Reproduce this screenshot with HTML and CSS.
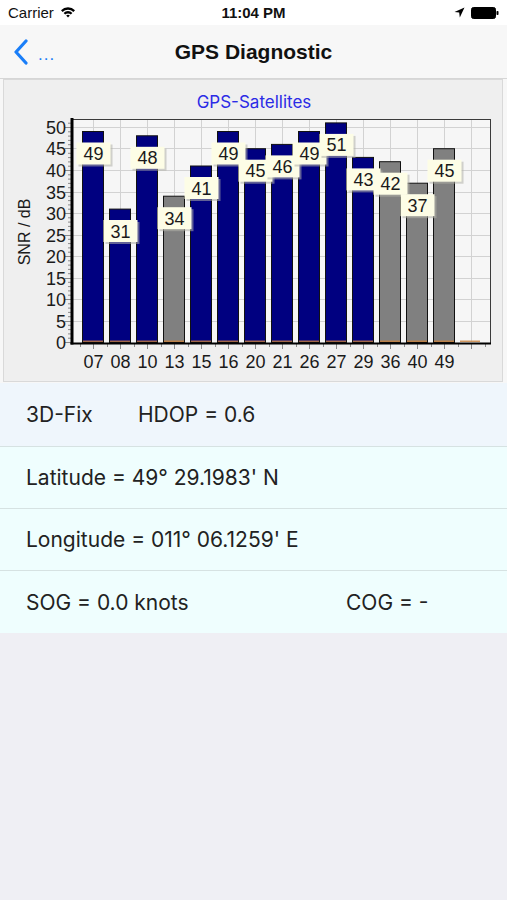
FILE: index.html
```html
<!DOCTYPE html>
<html>
<head>
<meta charset="utf-8">
<link rel="stylesheet" href="styles.css">
</head>
<body>
<div class="screen">
  <div class="status">
    <div class="status-left">
      <span class="carrier">Carrier</span>
      <svg class="wifi" width="16" height="12" viewBox="0 0 16 12">
        <path d="M1 4.2 A10 10 0 0 1 15 4.2 L13.4 5.9 A7.6 7.6 0 0 0 2.6 5.9 Z" fill="#000"/>
        <path d="M3.6 6.9 A6.2 6.2 0 0 1 12.4 6.9 L10.8 8.6 A3.9 3.9 0 0 0 5.2 8.6 Z" fill="#000"/>
        <path d="M6.2 9.6 A2.5 2.5 0 0 1 9.8 9.6 L8 11.5 Z" fill="#000"/>
      </svg>
    </div>
    <div class="time">11:04 PM</div>
    <div class="status-right">
      <svg class="loc" width="11" height="11" viewBox="0 0 11 11">
        <path d="M10.5 0.5 L0.5 5 L5.2 5.6 L5.8 10.5 Z" fill="#000"/>
      </svg>
      <svg class="battery" width="28" height="12" viewBox="0 0 28 12">
        <rect x="0.5" y="0.5" width="24" height="11" rx="2" fill="#000" stroke="#000"/>
        <rect x="25.5" y="4" width="2" height="4" rx="0.8" fill="#000"/>
      </svg>
    </div>
  </div>
  <div class="navbar">
    <div class="back">
      <svg class="chev" width="16" height="26" viewBox="0 0 16 26">
        <path d="M13 2 L3 13 L13 24" fill="none" stroke="#1a7ef8" stroke-width="3.2" stroke-linecap="round" stroke-linejoin="round"/>
      </svg>
      <span class="dots">...</span>
    </div>
    <div class="title">GPS Diagnostic</div>
  </div>

  <div class="chart-panel">
    <svg class="chart" width="507" height="304" viewBox="0 79 507 304">
      <rect x="0" y="79" width="507" height="304" fill="#f7f7f7"/>
      <rect x="3.5" y="79.5" width="499" height="302" fill="#efefef" stroke="#d9d9d9"/>
      <text class="ctitle" x="254" y="108" text-anchor="middle">GPS-Satellites</text>
      <!-- plot area -->
      <rect x="72" y="119" width="419" height="224" fill="#f6f6f6"/>
      <g stroke="#d2d2d2" stroke-width="1">
        <line x1="73" y1="321.5" x2="490" y2="321.5"/>
        <line x1="73" y1="299.5" x2="490" y2="299.5"/>
        <line x1="73" y1="278.5" x2="490" y2="278.5"/>
        <line x1="73" y1="256.5" x2="490" y2="256.5"/>
        <line x1="73" y1="235.5" x2="490" y2="235.5"/>
        <line x1="73" y1="213.5" x2="490" y2="213.5"/>
        <line x1="73" y1="192.5" x2="490" y2="192.5"/>
        <line x1="73" y1="170.5" x2="490" y2="170.5"/>
        <line x1="73" y1="148.5" x2="490" y2="148.5"/>
        <line x1="73" y1="127.5" x2="490" y2="127.5"/>
        <line x1="93.5" y1="120" x2="93.5" y2="342"/>
        <line x1="120.5" y1="120" x2="120.5" y2="342"/>
        <line x1="147.5" y1="120" x2="147.5" y2="342"/>
        <line x1="174.5" y1="120" x2="174.5" y2="342"/>
        <line x1="201.5" y1="120" x2="201.5" y2="342"/>
        <line x1="228.5" y1="120" x2="228.5" y2="342"/>
        <line x1="255.5" y1="120" x2="255.5" y2="342"/>
        <line x1="282.5" y1="120" x2="282.5" y2="342"/>
        <line x1="309.5" y1="120" x2="309.5" y2="342"/>
        <line x1="336.5" y1="120" x2="336.5" y2="342"/>
        <line x1="363.5" y1="120" x2="363.5" y2="342"/>
        <line x1="390.5" y1="120" x2="390.5" y2="342"/>
        <line x1="417.5" y1="120" x2="417.5" y2="342"/>
        <line x1="444.5" y1="120" x2="444.5" y2="342"/>
        <line x1="471.5" y1="120" x2="471.5" y2="342"/>
      </g>
      <!-- plot frame top/right -->
      <line x1="72" y1="119.5" x2="491" y2="119.5" stroke="#3a3a3a" stroke-width="1"/>
      <line x1="490.5" y1="119" x2="490.5" y2="343" stroke="#3a3a3a" stroke-width="1"/>

      <!-- y ticks -->
      <g stroke="#8a8a8a" stroke-width="1">
        <line x1="65" y1="342.5" x2="71" y2="342.5"/>
        <line x1="68" y1="338.2" x2="71" y2="338.2"/>
        <line x1="68" y1="333.9" x2="71" y2="333.9"/>
        <line x1="68" y1="329.6" x2="71" y2="329.6"/>
        <line x1="68" y1="325.3" x2="71" y2="325.3"/>
        <line x1="65" y1="321.5" x2="71" y2="321.5"/>
        <line x1="68" y1="316.7" x2="71" y2="316.7"/>
        <line x1="68" y1="312.4" x2="71" y2="312.4"/>
        <line x1="68" y1="308.1" x2="71" y2="308.1"/>
        <line x1="68" y1="303.8" x2="71" y2="303.8"/>
        <line x1="65" y1="299.5" x2="71" y2="299.5"/>
        <line x1="68" y1="295.2" x2="71" y2="295.2"/>
        <line x1="68" y1="290.9" x2="71" y2="290.9"/>
        <line x1="68" y1="286.6" x2="71" y2="286.6"/>
        <line x1="68" y1="282.3" x2="71" y2="282.3"/>
        <line x1="65" y1="278.5" x2="71" y2="278.5"/>
        <line x1="68" y1="273.7" x2="71" y2="273.7"/>
        <line x1="68" y1="269.4" x2="71" y2="269.4"/>
        <line x1="68" y1="265.1" x2="71" y2="265.1"/>
        <line x1="68" y1="260.8" x2="71" y2="260.8"/>
        <line x1="65" y1="256.5" x2="71" y2="256.5"/>
        <line x1="68" y1="252.2" x2="71" y2="252.2"/>
        <line x1="68" y1="247.9" x2="71" y2="247.9"/>
        <line x1="68" y1="243.6" x2="71" y2="243.6"/>
        <line x1="68" y1="239.3" x2="71" y2="239.3"/>
        <line x1="65" y1="235.5" x2="71" y2="235.5"/>
        <line x1="68" y1="230.7" x2="71" y2="230.7"/>
        <line x1="68" y1="226.4" x2="71" y2="226.4"/>
        <line x1="68" y1="222.1" x2="71" y2="222.1"/>
        <line x1="68" y1="217.8" x2="71" y2="217.8"/>
        <line x1="65" y1="213.5" x2="71" y2="213.5"/>
        <line x1="68" y1="209.2" x2="71" y2="209.2"/>
        <line x1="68" y1="204.9" x2="71" y2="204.9"/>
        <line x1="68" y1="200.6" x2="71" y2="200.6"/>
        <line x1="68" y1="196.3" x2="71" y2="196.3"/>
        <line x1="65" y1="192.5" x2="71" y2="192.5"/>
        <line x1="68" y1="187.7" x2="71" y2="187.7"/>
        <line x1="68" y1="183.4" x2="71" y2="183.4"/>
        <line x1="68" y1="179.1" x2="71" y2="179.1"/>
        <line x1="68" y1="174.8" x2="71" y2="174.8"/>
        <line x1="65" y1="170.5" x2="71" y2="170.5"/>
        <line x1="68" y1="166.2" x2="71" y2="166.2"/>
        <line x1="68" y1="161.9" x2="71" y2="161.9"/>
        <line x1="68" y1="157.6" x2="71" y2="157.6"/>
        <line x1="68" y1="153.3" x2="71" y2="153.3"/>
        <line x1="65" y1="148.5" x2="71" y2="148.5"/>
        <line x1="68" y1="144.7" x2="71" y2="144.7"/>
        <line x1="68" y1="140.4" x2="71" y2="140.4"/>
        <line x1="68" y1="136.1" x2="71" y2="136.1"/>
        <line x1="68" y1="131.8" x2="71" y2="131.8"/>
        <line x1="65" y1="127.5" x2="71" y2="127.5"/>
        <line x1="68" y1="123.2" x2="71" y2="123.2"/>
      </g>
      <!-- x ticks -->
      <g stroke="#8a8a8a" stroke-width="1">
        <line x1="93.5" y1="344" x2="93.5" y2="349"/>
        <line x1="120.5" y1="344" x2="120.5" y2="349"/>
        <line x1="147.5" y1="344" x2="147.5" y2="349"/>
        <line x1="174.5" y1="344" x2="174.5" y2="349"/>
        <line x1="201.5" y1="344" x2="201.5" y2="349"/>
        <line x1="228.5" y1="344" x2="228.5" y2="349"/>
        <line x1="255.5" y1="344" x2="255.5" y2="349"/>
        <line x1="282.5" y1="344" x2="282.5" y2="349"/>
        <line x1="309.5" y1="344" x2="309.5" y2="349"/>
        <line x1="336.5" y1="344" x2="336.5" y2="349"/>
        <line x1="363.5" y1="344" x2="363.5" y2="349"/>
        <line x1="390.5" y1="344" x2="390.5" y2="349"/>
        <line x1="417.5" y1="344" x2="417.5" y2="349"/>
        <line x1="444.5" y1="344" x2="444.5" y2="349"/>
        <line x1="471.5" y1="344" x2="471.5" y2="349"/>
        <line x1="80.5" y1="344" x2="80.5" y2="347"/>
        <line x1="107.5" y1="344" x2="107.5" y2="347"/>
        <line x1="134.5" y1="344" x2="134.5" y2="347"/>
        <line x1="161.5" y1="344" x2="161.5" y2="347"/>
        <line x1="188.5" y1="344" x2="188.5" y2="347"/>
        <line x1="215.5" y1="344" x2="215.5" y2="347"/>
        <line x1="242.5" y1="344" x2="242.5" y2="347"/>
        <line x1="269.5" y1="344" x2="269.5" y2="347"/>
        <line x1="296.5" y1="344" x2="296.5" y2="347"/>
        <line x1="323.5" y1="344" x2="323.5" y2="347"/>
        <line x1="350.5" y1="344" x2="350.5" y2="347"/>
        <line x1="377.5" y1="344" x2="377.5" y2="347"/>
        <line x1="404.5" y1="344" x2="404.5" y2="347"/>
        <line x1="431.5" y1="344" x2="431.5" y2="347"/>
        <line x1="458.5" y1="344" x2="458.5" y2="347"/>
        <line x1="485.5" y1="344" x2="485.5" y2="347"/>
      </g>

      <!-- bars -->
      <g stroke="#111" stroke-width="1">
        <rect class="bar-b" x="82.5" y="131.5" width="21" height="211"/>
        <rect class="bar-b" x="109.5" y="209.1" width="21" height="133.4"/>
        <rect class="bar-b" x="136.5" y="135.8" width="21" height="206.7"/>
        <rect class="bar-g" x="163.5" y="196.2" width="21" height="146.3"/>
        <rect class="bar-b" x="190.5" y="166" width="21" height="176.5"/>
        <rect class="bar-b" x="217.5" y="131.5" width="21" height="211"/>
        <rect class="bar-b" x="244.5" y="148.7" width="21" height="193.8"/>
        <rect class="bar-b" x="271.5" y="144.4" width="21" height="198.1"/>
        <rect class="bar-b" x="298.5" y="131.5" width="21" height="211"/>
        <rect class="bar-b" x="325.5" y="122.9" width="21" height="219.6"/>
        <rect class="bar-b" x="352.5" y="157.4" width="21" height="185.1"/>
        <rect class="bar-g" x="379.5" y="161.7" width="21" height="180.8"/>
        <rect class="bar-g" x="406.5" y="183.2" width="21" height="159.3"/>
        <rect class="bar-g" x="433.5" y="148.7" width="21" height="193.8"/>
      </g>
      <!-- orange baselines -->
      <g stroke="#c9803a" stroke-width="1.2">
        <line x1="83" y1="341.2" x2="103" y2="341.2"/>
        <line x1="110" y1="341.2" x2="130" y2="341.2"/>
        <line x1="137" y1="341.2" x2="157" y2="341.2"/>
        <line x1="164" y1="341.2" x2="184" y2="341.2"/>
        <line x1="191" y1="341.2" x2="211" y2="341.2"/>
        <line x1="218" y1="341.2" x2="238" y2="341.2"/>
        <line x1="245" y1="341.2" x2="265" y2="341.2"/>
        <line x1="272" y1="341.2" x2="292" y2="341.2"/>
        <line x1="299" y1="341.2" x2="319" y2="341.2"/>
        <line x1="326" y1="341.2" x2="346" y2="341.2"/>
        <line x1="353" y1="341.2" x2="373" y2="341.2"/>
        <line x1="380" y1="341.2" x2="400" y2="341.2"/>
        <line x1="407" y1="341.2" x2="427" y2="341.2"/>
        <line x1="434" y1="341.2" x2="454" y2="341.2"/>
        <line x1="460" y1="341.2" x2="480" y2="341.2"/>
      </g>

      <!-- axes -->
      <line x1="72" y1="118" x2="72" y2="344.5" stroke="#000" stroke-width="3"/>
      <line x1="70.5" y1="343.5" x2="491" y2="343.5" stroke="#000" stroke-width="2.2"/>

      <!-- y labels -->
      <g class="axlab" text-anchor="end">
        <text x="66" y="349">0</text>
        <text x="66" y="327.5">5</text>
        <text x="66" y="306">10</text>
        <text x="66" y="284.5">15</text>
        <text x="66" y="263">20</text>
        <text x="66" y="241.5">25</text>
        <text x="66" y="220">30</text>
        <text x="66" y="198.5">35</text>
        <text x="66" y="177">40</text>
        <text x="66" y="155">45</text>
        <text x="66" y="133.5">50</text>
      </g>
      <text class="ylabel" transform="translate(30 232) rotate(-90)" text-anchor="middle">SNR / dB</text>
      <!-- x labels -->
      <g class="axlab" text-anchor="middle">
        <text x="93.5" y="368">07</text>
        <text x="120.5" y="368">08</text>
        <text x="147.5" y="368">10</text>
        <text x="174.5" y="368">13</text>
        <text x="201.5" y="368">15</text>
        <text x="228.5" y="368">16</text>
        <text x="255.5" y="368">20</text>
        <text x="282.5" y="368">21</text>
        <text x="309.5" y="368">26</text>
        <text x="336.5" y="368">27</text>
        <text x="363.5" y="368">29</text>
        <text x="390.5" y="368">36</text>
        <text x="417.5" y="368">40</text>
        <text x="444.5" y="368">49</text>
      </g>

      <!-- value labels -->
      <g class="vlab">
        <rect class="sh" x="78.5" y="144.5" width="34" height="22"/><rect class="box" x="76.5" y="142.5" width="34" height="22"/><text x="93.5" y="160">49</text>
        <rect class="sh" x="105.5" y="222" width="34" height="22"/><rect class="box" x="103.5" y="220" width="34" height="22"/><text x="120.5" y="237.5">31</text>
        <rect class="sh" x="132.5" y="148.8" width="34" height="22"/><rect class="box" x="130.5" y="146.8" width="34" height="22"/><text x="147.5" y="164.3">48</text>
        <rect class="sh" x="159.5" y="209.2" width="34" height="22"/><rect class="box" x="157.5" y="207.2" width="34" height="22"/><text x="174.5" y="224.7">34</text>
        <rect class="sh" x="186.5" y="179" width="34" height="22"/><rect class="box" x="184.5" y="177" width="34" height="22"/><text x="201.5" y="194.5">41</text>
        <rect class="sh" x="213.5" y="144.5" width="34" height="22"/><rect class="box" x="211.5" y="142.5" width="34" height="22"/><text x="228.5" y="160">49</text>
        <rect class="sh" x="240.5" y="161.7" width="34" height="22"/><rect class="box" x="238.5" y="159.7" width="34" height="22"/><text x="255.5" y="177.2">45</text>
        <rect class="sh" x="267.5" y="157.4" width="34" height="22"/><rect class="box" x="265.5" y="155.4" width="34" height="22"/><text x="282.5" y="172.9">46</text>
        <rect class="sh" x="294.5" y="144.5" width="34" height="22"/><rect class="box" x="292.5" y="142.5" width="34" height="22"/><text x="309.5" y="160">49</text>
        <rect class="sh" x="321.5" y="135.9" width="34" height="22"/><rect class="box" x="319.5" y="133.9" width="34" height="22"/><text x="336.5" y="151.4">51</text>
        <rect class="sh" x="348.5" y="170.4" width="34" height="22"/><rect class="box" x="346.5" y="168.4" width="34" height="22"/><text x="363.5" y="185.9">43</text>
        <rect class="sh" x="375.5" y="174.7" width="34" height="22"/><rect class="box" x="373.5" y="172.7" width="34" height="22"/><text x="390.5" y="190.2">42</text>
        <rect class="sh" x="402.5" y="196.2" width="34" height="22"/><rect class="box" x="400.5" y="194.2" width="34" height="22"/><text x="417.5" y="211.7">37</text>
        <rect class="sh" x="429.5" y="161.7" width="34" height="22"/><rect class="box" x="427.5" y="159.7" width="34" height="22"/><text x="444.5" y="177.2">45</text>
      </g>
    </svg>
  </div>

  <div class="list">
    <div class="row row-first">
      <span class="fix">3D-Fix</span>
      <span>HDOP = 0.6</span>
    </div>
    <div class="row">
      <span>Latitude = 49° 29.1983' N</span>
    </div>
    <div class="row">
      <span>Longitude = 011° 06.1259' E</span>
    </div>
    <div class="row row-last">
      <span class="sog">SOG = 0.0 knots</span>
      <span>COG = -</span>
    </div>
  </div>
</div>
</body>
</html>
```
FILE: styles.css
```css
html, body {
  margin: 0;
  padding: 0;
}
body {
  background: #efeff4;
  font-family: "Liberation Sans", Arial, sans-serif;
  width: 507px;
  height: 900px;
  overflow: hidden;
}
.screen {
  width: 507px;
}
.status {
  height: 25px;
  background: #ffffff;
  display: flex;
  align-items: center;
  justify-content: space-between;
  padding: 0 8px;
  position: relative;
  box-sizing: border-box;
}
.status-left {
  display: flex;
  align-items: center;
  gap: 6px;
  width: 120px;
}
.carrier {
  font-size: 15px;
  color: #111;
}
.wifi {
  margin-top: -1px;
}
.time {
  font-size: 15px;
  font-weight: bold;
  color: #111;
}
.status-right {
  display: flex;
  align-items: center;
  justify-content: flex-end;
  gap: 6px;
  width: 120px;
}
.navbar {
  height: 53px;
  background: #f7f7f7;
  border-bottom: 1px solid #d6d6d6;
  display: flex;
  align-items: center;
  justify-content: center;
  position: relative;
}
.back {
  position: absolute;
  left: 13px;
  top: 14px;
  display: flex;
  align-items: flex-end;
  gap: 9px;
}
.dots {
  color: #1a7ef8;
  font-size: 17px;
  letter-spacing: 1px;
  line-height: 1;
  margin-bottom: 2px;
}
.title {
  font-size: 21px;
  font-weight: bold;
  color: #111;
  margin-top: 1px;
}
.chart-panel {
  height: 304px;
  line-height: 0;
}
.chart {
  display: block;
}
.ctitle {
  font-family: Inter, "Liberation Sans", sans-serif;
  font-size: 17px;
  fill: #2b2be6;
}
.axlab {
  font-family: "Liberation Sans", Arial, sans-serif;
  font-size: 18px;
  fill: #1a1a1a;
}
.ylabel {
  font-family: "Liberation Sans", Arial, sans-serif;
  font-size: 16px;
  fill: #1a1a1a;
}
.bar-b {
  fill: #000080;
}
.bar-g {
  fill: #808080;
}
.vlab text {
  font-family: "Liberation Sans", Arial, sans-serif;
  font-size: 18px;
  fill: #1a1a1a;
  text-anchor: middle;
}
.vlab .sh {
  fill: #b0b0a8;
  opacity: 0.55;
}
.vlab .box {
  fill: #fdfde6;
}
.list {
  background: #effefe;
}
.row {
  height: 62px;
  display: flex;
  align-items: center;
  padding-left: 26px;
  font-family: Inter, "Liberation Sans", sans-serif;
  font-size: 21px;
  color: #222;
  border-top: 1px solid #d6e2e2;
  box-sizing: border-box;
}
.row-first {
  background: #eff6fc;
  border-top: none;
  height: 63px;
}
.row-last {
  height: 63px;
}
.fix {
  width: 112px;
}
.sog {
  width: 320px;
}
```
